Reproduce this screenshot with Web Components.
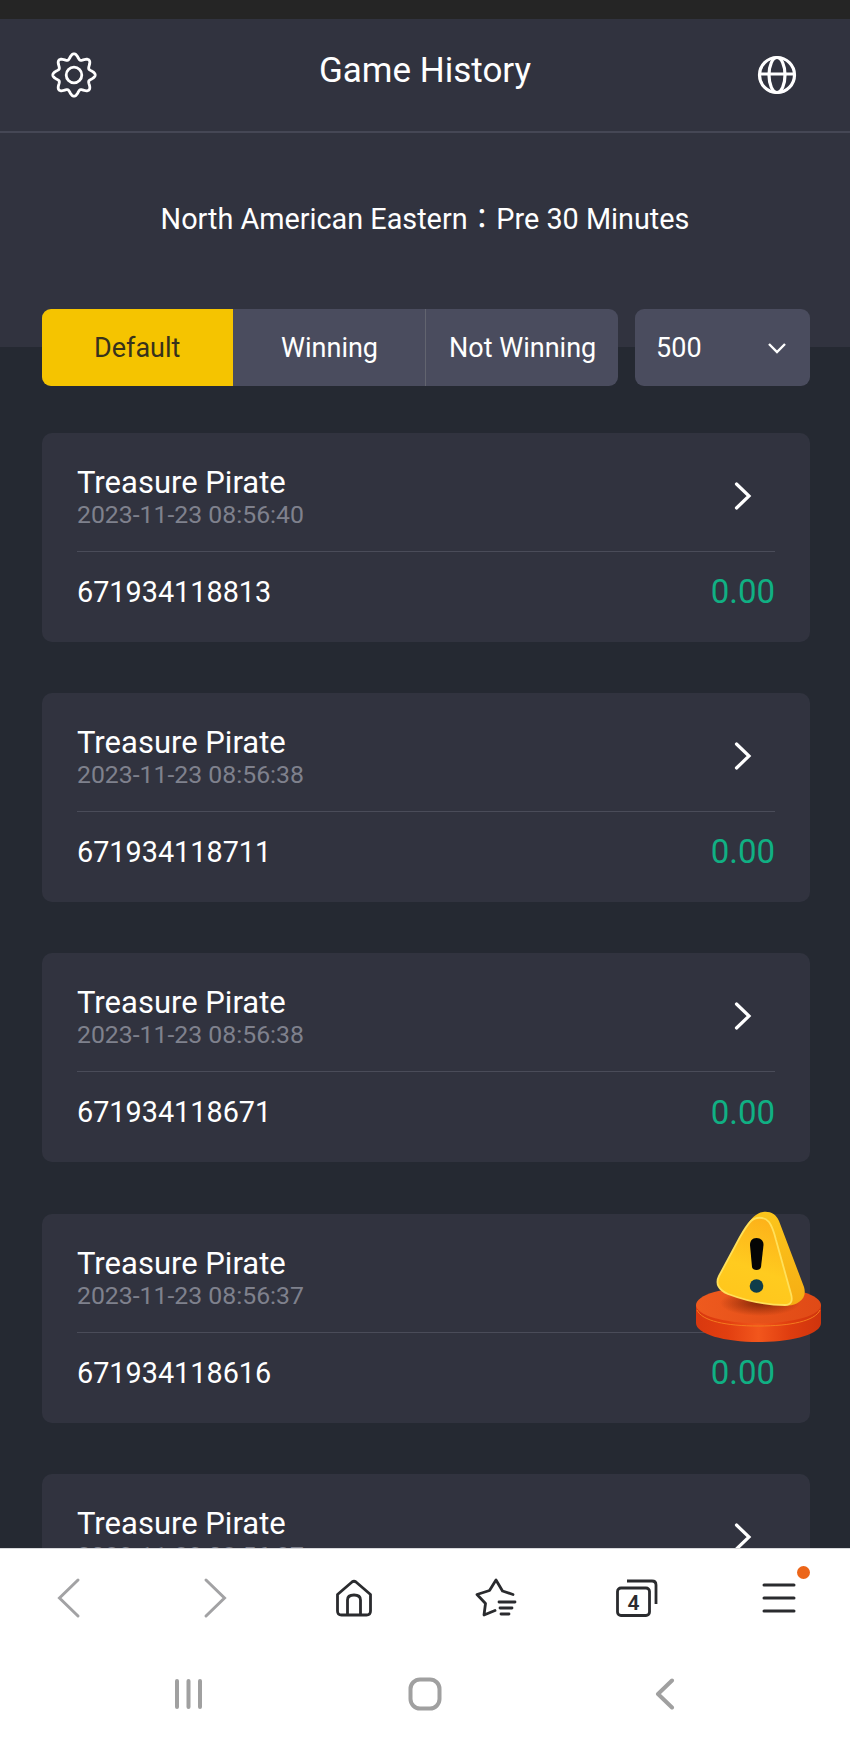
<!DOCTYPE html>
<html>
<head>
<meta charset="utf-8">
<title>Game History</title>
<style>
    html, body { margin: 0; padding: 0; height: 100%; background: #252932; overflow: hidden; }
    body { font-family: Roboto, "Noto Sans CJK TC", sans-serif; }
</style>
</head>
<body>
<history-page>
    <history-top slot="top"></history-top>
    <history-card slot="list" name="Treasure Pirate" time="2023-11-23 08:56:40" order="671934118813" amount="0.00"></history-card>
    <history-card slot="list" name="Treasure Pirate" time="2023-11-23 08:56:38" order="671934118711" amount="0.00"></history-card>
    <history-card slot="list" name="Treasure Pirate" time="2023-11-23 08:56:38" order="671934118671" amount="0.00"></history-card>
    <history-card slot="list" name="Treasure Pirate" time="2023-11-23 08:56:37" order="671934118616" amount="0.00"></history-card>
    <history-card slot="list" name="Treasure Pirate" time="2023-11-23 08:56:37" order="671934118560" amount="0.00"></history-card>
    <browser-bar slot="bottom"></browser-bar>
    <system-nav slot="bottom"></system-nav>
    <alert-badge slot="float"></alert-badge>
</history-page>

<script>
class HistoryPage extends HTMLElement {
    constructor() {
        super();
        this.attachShadow({ mode: 'open' }).innerHTML = `
        <style>
            :host { display: flex; flex-direction: column; height: 1746px; position: relative; overflow: hidden; color: #fff; }
            .status { height: 19px; background: #252525; flex: none; }
            .list { flex: 1; min-height: 0; overflow: hidden; display: flex; flex-direction: column; gap: 51.4px; padding: 46.5px 40px 0 42px; }
        </style>
        <div class="status"></div>
        <slot name="top"></slot>
        <div class="list"><slot name="list"></slot></div>
        <slot name="bottom"></slot>
        <slot name="float"></slot>`;
    }
}

class HistoryTop extends HTMLElement {
    constructor() {
        super();
        // gear outline: a wavy ring with 8 lobes
        let gear = '';
        for (let i = 0; i < 160; i++) {
            const a = i / 160 * Math.PI * 2 - Math.PI / 2;
            const r = 18.6 + 2.6 * Math.cos(8 * (a + Math.PI / 2));
            gear += (i ? 'L' : 'M') + (24 + r * Math.cos(a)).toFixed(2) + ' ' + (24 + r * Math.sin(a)).toFixed(2);
        }
        this.attachShadow({ mode: 'open' }).innerHTML = `
        <style>
            :host { display: block; flex: none; background: linear-gradient(#31333f 0 328px, #252932 328px); }
            .bar { display: flex; justify-content: space-between; padding: 0 52px 0 50px; box-sizing: border-box; border-bottom: 2px solid #454755; height: 114px; position: relative; align-items: center; }
            .bar svg { display: block; }
            h1 { position: absolute; left: 0; right: 0; top: 30px; margin: 0; text-align: center; font: 400 35px/44px Roboto, sans-serif; color: #fff; }
            .notice { height: 176px; box-sizing: border-box; padding-top: 66px; text-align: center; font-size: 28.8px; line-height: 40px; }
            .filters { display: flex; gap: 17px; padding: 0 40px 0 41.5px; height: 77px; }
            .tabs { width: 577px; display: flex; border-radius: 9px; overflow: hidden; background: #4a4c5e; }
            .tab { display: flex; align-items: center; justify-content: center; font-size: 27px; box-sizing: border-box; }
            .tab.on { width: 191.5px; background: #f5c400; color: #37321c; }
            .tab.mid { width: 193.5px; border-right: 1px solid #62646f; padding-left: 1px; }
            .tab.end { width: 192px; padding-left: 1px; }
            .select { width: 175px; border-radius: 9px; background: #4a4c5e; display: flex; align-items: center; justify-content: space-between; padding: 0 23px 0 21px; box-sizing: border-box; font-size: 27px; }
        </style>
        <div class="bar">
            <svg width="48" height="48" viewBox="0 0 48 48" fill="none" stroke="#fff" stroke-width="2.8" stroke-linejoin="round">
                <path d="${gear}Z"/><circle cx="24" cy="24" r="7.8"/>
            </svg>
            <h1>Game History</h1>
            <svg width="42" height="42" viewBox="0 0 42 42" fill="none" stroke="#fff" stroke-width="3.2">
                <circle cx="21" cy="21" r="17.5"/><ellipse cx="21" cy="21" rx="8" ry="17.5"/><path d="M4 20H38"/>
            </svg>
        </div>
        <div class="notice">North American Eastern：Pre 30 Minutes</div>
        <div class="filters">
            <div class="tabs">
                <div class="tab on">Default</div>
                <div class="tab mid">Winning</div>
                <div class="tab end">Not Winning</div>
            </div>
            <div class="select">500
                <svg width="20" height="14" viewBox="0 0 20 14" fill="none" stroke="#fff" stroke-width="2.4"><path d="M2 3L10 11L18 3"/></svg>
            </div>
        </div>`;
    }
}

class HistoryCard extends HTMLElement {
    constructor() {
        super();
        this.attachShadow({ mode: 'open' }).innerHTML = `
        <style>
            :host { display: block; flex: none; height: 209px; box-sizing: border-box; background: #31333f; border-radius: 10px; padding: 0 35px; }
            .head { height: 119px; box-sizing: border-box; border-bottom: 1px solid #4a4c59; display: flex; justify-content: space-between; }
            .name { font-size: 31px; line-height: 36px; padding-top: 32px; }
            .time { font-size: 24.8px; line-height: 30px; color: #7f818d; margin-top: -1px; }
            .head svg { margin: 49px 23px 0 0; flex: none; }
            .foot { height: 80px; display: flex; justify-content: space-between; align-items: center; font-size: 28.8px; }
            .amount { font-size: 33px; color: #10b083; }
        </style>
        <div class="head">
            <div>
                <div class="name"></div>
                <div class="time"></div>
            </div>
            <svg width="18" height="28" viewBox="0 0 18 28" fill="none" stroke="#fff" stroke-width="3.2" stroke-linecap="round"><path d="M2.5 2L15 14L2.5 26"/></svg>
        </div>
        <div class="foot"><span class="order"></span><span class="amount"></span></div>`;
    }

    connectedCallback() {
        this.shadowRoot.querySelector('.name').textContent = this.getAttribute('name');
        this.shadowRoot.querySelector('.time').textContent = this.getAttribute('time');
        this.shadowRoot.querySelector('.order').textContent = this.getAttribute('order');
        this.shadowRoot.querySelector('.amount').textContent = this.getAttribute('amount');
    }
}

class BrowserBar extends HTMLElement {
    constructor() {
        super();
        this.attachShadow({ mode: 'open' }).innerHTML = `
        <style>
            :host { display: grid; grid-template-columns: repeat(6, 1fr); align-items: center; justify-items: center; flex: none; height: 102px; padding-bottom: 3px; background: #fff; border-top: 1px solid #d8d9dc; box-sizing: border-box; }
            svg { display: block; overflow: visible; }
            .cell { position: relative; }
            .dot { position: absolute; right: -14px; top: -17px; width: 13px; height: 13px; border-radius: 50%; background: #ec6519; }
            .count { font: 600 21px/1 Roboto, sans-serif; fill: #2b2b2e; }
        </style>
        <svg width="24" height="40" viewBox="0 0 24 40" fill="none" stroke="#a2a2a4" stroke-width="3" stroke-linecap="round" style="margin-right:4px"><path d="M21 2L2.5 20L21 38"/></svg>
        <svg width="24" height="40" viewBox="0 0 24 40" fill="none" stroke="#a2a2a4" stroke-width="3" stroke-linecap="round" style="margin-left:5px"><path d="M3 2L21.5 20L3 38"/></svg>
        <svg width="38" height="38" viewBox="0 0 38 38" fill="none" stroke="#2a2b2e" stroke-width="2.8" stroke-linejoin="round">
            <path d="M2.5 15.5L17 3Q19 1.6 21 3L35.5 15.5V32Q35.5 36 31.5 36H6.5Q2.5 36 2.5 32Z"/>
            <path d="M12.5 36V21Q12.5 16 19 16Q25.500 16 25.500 21V36"/>
        </svg>
        <svg width="42" height="40" viewBox="0 0 42 40" fill="none" stroke="#2a2b2e" stroke-width="2.8" stroke-linecap="round" stroke-linejoin="round">
            <path d="M38 16.500L27.500 13L21 2L14.500 12.500L2 16.500L10.500 25.500L9 37L20 32.500"/>
            <path d="M24 24H40M25 30H37M26 36H34"/>
        </svg>
        <svg width="42" height="38" viewBox="0 0 42 38" fill="none" stroke="#2a2b2e" stroke-width="2.8" stroke-linejoin="round">
            <rect x="1.500" y="9" width="32" height="27.500" rx="3.500"/>
            <path d="M11 2H36Q40 2 40 6V25"/>
            <text class="count" x="17.500" y="31" text-anchor="middle" stroke="none">4</text>
        </svg>
        <div class="cell">
            <svg width="34" height="30" viewBox="0 0 34 30" fill="none" stroke="#2a2b2e" stroke-width="3" stroke-linecap="round"><path d="M2 2H32M2 15H32M2 28H32"/></svg>
            <span class="dot"></span>
        </div>`;
    }
}

class SystemNav extends HTMLElement {
    constructor() {
        super();
        this.attachShadow({ mode: 'open' }).innerHTML = `
        <style>
            :host { display: grid; grid-template-columns: repeat(3, 236px); justify-content: center; justify-items: center; align-items: center; flex: none; height: 96px; padding-bottom: 8px; box-sizing: border-box; background: #fff; }
            svg { display: block; }
        </style>
        <svg width="30" height="32" viewBox="0 0 30 32" fill="none" stroke="#a0a0a0" stroke-width="4" stroke-linecap="round"><path d="M3 3V29M14.500 3V29M26 3V29"/></svg>
        <svg width="34" height="34" viewBox="0 0 34 34" fill="none" stroke="#a0a0a0" stroke-width="4"><rect x="2.500" y="2.500" width="29" height="29" rx="9.500"/></svg>
        <svg width="20" height="32" viewBox="0 0 20 32" fill="none" stroke="#a0a0a0" stroke-width="4" stroke-linecap="round" stroke-linejoin="round" style="margin-left:8px"><path d="M17 2.500L3 16L17 29.500"/></svg>`;
    }
}

class AlertBadge extends HTMLElement {
    constructor() {
        super();
        this.attachShadow({ mode: 'open' }).innerHTML = `
        <style>
            :host { position: absolute; left: 660px; top: 1190px; width: 190px; height: 170px; display: block; pointer-events: none; }
            svg { display: block; }
        </style>
        <svg width="190" height="170" viewBox="0 0 190 170">
            <defs>
                <linearGradient id="side" x1="0" x2="1" y1="0" y2="0">
                    <stop offset="0" stop-color="#d9380f"/><stop offset=".25" stop-color="#e23f10"/>
                    <stop offset=".5" stop-color="#f2561c"/><stop offset=".75" stop-color="#df3d0f"/>
                    <stop offset="1" stop-color="#cf340d"/>
                </linearGradient>
                <linearGradient id="top" x1="0" x2="1" y1="0" y2="0">
                    <stop offset="0" stop-color="#ee5a1e"/><stop offset="1" stop-color="#e04a16"/>
                </linearGradient>
                <linearGradient id="back" x1="0" x2="0" y1="0" y2="1">
                    <stop offset="0" stop-color="#fbc51c"/><stop offset="1" stop-color="#f6ad13"/>
                </linearGradient>
                <linearGradient id="face" x1=".7" x2=".4" y1="0" y2="1">
                    <stop offset="0" stop-color="#fdb019"/><stop offset=".6" stop-color="#ffcb1f"/><stop offset="1" stop-color="#ffc61c"/>
                </linearGradient>
                <radialGradient id="shade" cx=".5" cy=".5" r=".5">
                    <stop offset="0" stop-color="#7d2406" stop-opacity=".9"/><stop offset="1" stop-color="#7d2406" stop-opacity="0"/>
                </radialGradient>
            </defs>
            <path d="M36 115V133C36 144 64 152 98.500 152S161 144 161 133V115Z" fill="url(#side)"/>
            <ellipse cx="98.500" cy="115" rx="62.500" ry="18.500" fill="url(#top)"/>
            <path d="M37 120C42 131 66 136 98.500 136S155 131 160 120" fill="none" stroke="#f47a1e" stroke-width="1"/>
            <ellipse cx="100" cy="113" rx="40" ry="13" fill="url(#shade)"/>
            <path d="M103 22C110 21 116 24 119 31L144 97C146 104 144 109 139 112C135 115 130 116 124 115L70 105L86 38C90 29 96 23 103 22Z" fill="url(#back)"/>
            <path d="M91 31C95 27 104 26 109 32C112 36 114 42 116 50L131 104C133 111 131 115 125 115C104 115 84 110 68 104C59 100 55 94 59 86L80 47C84 40 87 35 91 31Z" fill="url(#face)" stroke="#ffe05a" stroke-width="1.800"/>
            <path d="M96.500 48C101 48 103.500 51 103.500 55L101 77C100.500 81 92.500 81 92 77L90 55C90 51 92 48 96.500 48Z" fill="#050505"/>
            <circle cx="96.500" cy="96" r="6.800" fill="#0f3d4a"/>
        </svg>`;
    }
}

customElements.define('history-page', HistoryPage);
customElements.define('history-top', HistoryTop);
customElements.define('history-card', HistoryCard);
customElements.define('browser-bar', BrowserBar);
customElements.define('system-nav', SystemNav);
customElements.define('alert-badge', AlertBadge);
</script>
</body>
</html>
